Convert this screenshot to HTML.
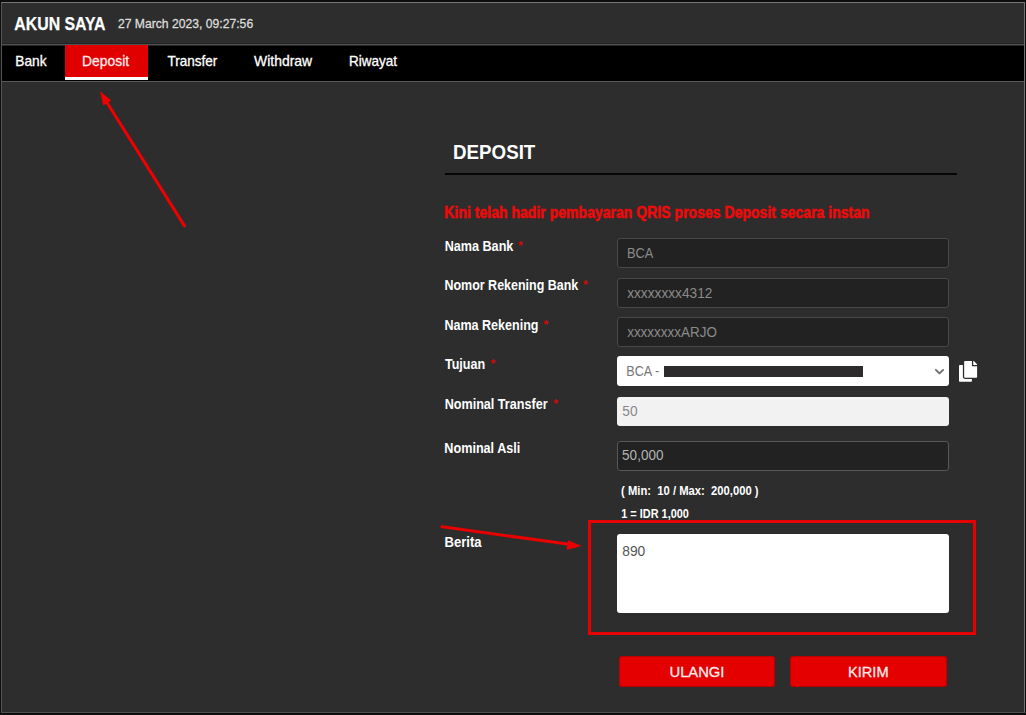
<!DOCTYPE html>
<html lang="id">
<head>
<meta charset="utf-8">
<title>Akun Saya - Deposit</title>
<style>
html,body{margin:0;padding:0;}
body{width:1026px;height:715px;overflow:hidden;background:#0c0d0c;font-family:"Liberation Sans",sans-serif;position:relative;}
.abs,.t{position:absolute;}
.t{white-space:pre;margin:0;padding:0;}
#frame{left:1px;top:2px;width:1022px;height:709px;border:1px solid #6a6a6a;border-color:#787878 #727272 #4e4e4e #565656;background:#2d2d2d;}
#nav{left:2px;top:43px;width:1022px;height:36px;background:#000;border-top:1px solid #4f4f4f;border-bottom:1px solid #595959;box-shadow:0 -1px 0 #242424, inset 0 1px 0 #262626;margin-top:1px;}
#tab{left:65px;top:45px;width:83px;height:32px;background:#e00000;border-bottom:3px solid #fff;}
#hline{left:445px;top:172.5px;width:512px;height:2px;background:#060606;}
.inp{left:617px;width:330px;height:28px;border:1px solid #484848;border-radius:3px;background:#222222;}
#sel{left:617px;top:356.2px;width:331.6px;height:29.6px;border-radius:3px;background:#fff;}
#redact{left:663.5px;top:366px;width:199.5px;height:11px;background:#2d2b2b;}
#nom{left:617px;top:396.7px;width:331.6px;height:29.6px;border-radius:3px;background:#f2f2f2;}
#ta{left:617px;top:534px;width:332px;height:79px;border-radius:3px;background:#fff;}
#redbox{left:588px;top:520px;width:382px;height:109px;border:3px solid #e60000;}
.btn{top:656px;height:31px;border-radius:3px;background:#e50000;box-shadow:inset 0 0 0 1px rgba(110,0,0,.35);}
#b1{left:619px;width:156px;}
#b2{left:790px;width:156.6px;}
.ast{color:#d40808;font-size:12px;font-weight:bold;line-height:12px;}
svg{position:absolute;overflow:visible;}
#t_akun{left:14.00px;top:13.02px;font-size:19px;line-height:22.8px;font-weight:bold;color:#ffffff;transform:translateX(0.34px) scaleX(0.8330);transform-origin:0 0;-webkit-text-stroke:0.25px currentColor;}
#t_date{left:117.00px;top:15.91px;font-size:13.2px;line-height:15.84px;font-weight:normal;color:#dcdcdc;transform:translateX(0.90px) scaleX(0.9223);transform-origin:0 0;-webkit-text-stroke:0.3px currentColor;}
#n_bank{left:15.00px;top:52.66px;font-size:14.2px;line-height:17.04px;font-weight:normal;color:#ffffff;transform:translateX(0.30px) scaleX(0.9692);transform-origin:0 0;-webkit-text-stroke:0.3px currentColor;}
#n_dep{left:82.00px;top:52.66px;font-size:14.2px;line-height:17.04px;font-weight:normal;color:#ffe9e9;transform:translateX(0.10px) scaleX(0.9768);transform-origin:0 0;-webkit-text-stroke:0.3px currentColor;}
#n_tra{left:167.00px;top:52.66px;font-size:14.2px;line-height:17.04px;font-weight:normal;color:#ffffff;transform:translateX(0.47px) scaleX(0.9532);transform-origin:0 0;-webkit-text-stroke:0.3px currentColor;}
#n_wit{left:254.00px;top:52.66px;font-size:14.2px;line-height:17.04px;font-weight:normal;color:#ffffff;transform:translateX(0.10px) scaleX(0.9797);transform-origin:0 0;-webkit-text-stroke:0.3px currentColor;}
#n_riw{left:349.00px;top:52.66px;font-size:14.2px;line-height:17.04px;font-weight:normal;color:#ffffff;transform:translateX(0.12px) scaleX(0.9508);transform-origin:0 0;-webkit-text-stroke:0.3px currentColor;}
#h_dep{left:453.00px;top:139.51px;font-size:20.8px;line-height:24.96px;font-weight:bold;color:#ffffff;transform:translateX(0.00px) scaleX(0.9018);transform-origin:0 0;}
#h_red{left:444.00px;top:203.21px;font-size:17px;line-height:20.4px;font-weight:bold;color:#ec0c0c;transform:translateX(0.34px) scaleX(0.8261);transform-origin:0 0;-webkit-text-stroke:0.35px #ec0c0c;text-shadow:0 0 1px rgba(236,12,12,.55);}
#l_1{left:444.00px;top:238.37px;font-size:14.4px;line-height:17.28px;font-weight:bold;color:#ffffff;transform:translateX(0.64px) scaleX(0.8767);transform-origin:0 0;}
#l_2{left:444.00px;top:277.37px;font-size:14.4px;line-height:17.28px;font-weight:bold;color:#ffffff;transform:translateX(0.43px) scaleX(0.8675);transform-origin:0 0;}
#l_3{left:444.00px;top:316.97px;font-size:14.4px;line-height:17.28px;font-weight:bold;color:#ffffff;transform:translateX(0.42px) scaleX(0.8709);transform-origin:0 0;}
#l_4{left:444.00px;top:356.27px;font-size:14.4px;line-height:17.28px;font-weight:bold;color:#ffffff;transform:translateX(0.92px) scaleX(0.8707);transform-origin:0 0;}
#l_5{left:444.00px;top:396.37px;font-size:14.4px;line-height:17.28px;font-weight:bold;color:#ffffff;transform:translateX(0.63px) scaleX(0.8757);transform-origin:0 0;}
#l_6{left:444.00px;top:440.37px;font-size:14.4px;line-height:17.28px;font-weight:bold;color:#ffffff;transform:translateX(0.33px) scaleX(0.8770);transform-origin:0 0;}
#l_7{left:444.00px;top:534.37px;font-size:14.4px;line-height:17.28px;font-weight:bold;color:#ffffff;transform:translateX(0.52px) scaleX(0.9090);transform-origin:0 0;}
#i_1{left:626.00px;top:244.57px;font-size:14.4px;line-height:17.28px;font-weight:normal;color:#8a8a8a;transform:translateX(0.91px) scaleX(0.8912);transform-origin:0 0;}
#i_2{left:627.00px;top:284.97px;font-size:14.4px;line-height:17.28px;font-weight:normal;color:#8a8a8a;transform:translateX(0.17px) scaleX(0.9512);transform-origin:0 0;}
#i_3{left:627.00px;top:324.37px;font-size:14.4px;line-height:17.28px;font-weight:normal;color:#8a8a8a;transform:translateX(0.16px) scaleX(0.9350);transform-origin:0 0;}
#i_4{left:626.00px;top:363.37px;font-size:14.4px;line-height:17.28px;font-weight:normal;color:#777777;transform:translateX(0.32px) scaleX(0.8779);transform-origin:0 0;}
#i_5{left:622.00px;top:402.67px;font-size:14.3px;line-height:17.16px;font-weight:normal;color:#888888;transform:translateX(0.36px) scaleX(0.9567);transform-origin:0 0;}
#i_6{left:622.00px;top:447.47px;font-size:14.3px;line-height:17.16px;font-weight:normal;color:#b4b4b4;transform:translateX(0.11px) scaleX(0.9444);transform-origin:0 0;}
#i_7{left:622.00px;top:543.17px;font-size:14.4px;line-height:17.28px;font-weight:normal;color:#555555;transform:translateX(0.23px) scaleX(0.9602);transform-origin:0 0;}
#s_1{left:621.00px;top:484.27px;font-size:12.6px;line-height:15.12px;font-weight:bold;color:#ffffff;transform:translateX(0.11px) scaleX(0.8927);transform-origin:0 0;}
#s_2{left:621.00px;top:507.07px;font-size:12.6px;line-height:15.12px;font-weight:bold;color:#ffffff;transform:translateX(0.19px) scaleX(0.8673);transform-origin:0 0;}
#b_1{left:669.00px;top:663.20px;font-size:15px;line-height:18.0px;font-weight:normal;color:#ffecec;transform:translateX(0.47px) scaleX(0.9841);transform-origin:0 0;-webkit-text-stroke:0.3px currentColor;}
#b_2{left:848.00px;top:663.20px;font-size:15px;line-height:18.0px;font-weight:normal;color:#ffecec;transform:translateX(0.03px) scaleX(0.9726);transform-origin:0 0;-webkit-text-stroke:0.3px currentColor;}
</style>
</head>
<body>
<div class="abs" id="frame"></div>
<div class="abs" id="nav"></div>
<div class="abs" id="tab"></div>
<div class="abs" id="hline"></div>
<div class="abs inp" style="top:238px"></div>
<div class="abs inp" style="top:277.5px"></div>
<div class="abs inp" style="top:317px"></div>
<div class="abs" id="sel"></div>
<div class="abs" id="redact"></div>
<div class="abs" id="nom"></div>
<div class="abs inp" style="top:440.6px;border-color:#585858"></div>
<div class="abs" id="redbox"></div>
<div class="abs" id="ta"></div>
<div class="abs btn" id="b1"></div>
<div class="abs btn" id="b2"></div>
<span class="t" id="t_akun">AKUN SAYA</span>
<span class="t" id="t_date">27 March 2023, 09:27:56</span>
<span class="t" id="n_bank">Bank</span>
<span class="t" id="n_dep">Deposit</span>
<span class="t" id="n_tra">Transfer</span>
<span class="t" id="n_wit">Withdraw</span>
<span class="t" id="n_riw">Riwayat</span>
<span class="t" id="h_dep">DEPOSIT</span>
<span class="t" id="h_red">Kini telah hadir pembayaran QRIS proses Deposit secara instan</span>
<span class="t" id="l_1">Nama Bank</span>
<span class="t" id="l_2">Nomor Rekening Bank</span>
<span class="t" id="l_3">Nama Rekening</span>
<span class="t" id="l_4">Tujuan</span>
<span class="t" id="l_5">Nominal Transfer</span>
<span class="t" id="l_6">Nominal Asli</span>
<span class="t" id="l_7">Berita</span>
<span class="t" id="i_1">BCA</span>
<span class="t" id="i_2">xxxxxxxx4312</span>
<span class="t" id="i_3">xxxxxxxxARJO</span>
<span class="t" id="i_4">BCA -</span>
<span class="t" id="i_5">50</span>
<span class="t" id="i_6">50,000</span>
<span class="t" id="i_7">890</span>
<span class="t" id="s_1">( Min:  10 / Max:  200,000 )</span>
<span class="t" id="s_2">1 = IDR 1,000</span>
<span class="t" id="b_1">ULANGI</span>
<span class="t" id="b_2">KIRIM</span>
<!-- asterisks -->
<span class="t ast" style="left:518.02px;top:239.76px">*</span>
<span class="t ast" style="left:583.12px;top:279.26px">*</span>
<span class="t ast" style="left:543.52px;top:318.56px">*</span>
<span class="t ast" style="left:490.52px;top:358.06px">*</span>
<span class="t ast" style="left:553.33px;top:398.06px">*</span>
<!-- chevron -->
<svg style="left:935px;top:368.6px" width="9" height="6" viewBox="0 0 9 6"><path d="M0.9 0.9 L4.5 4.4 L8.1 0.9" fill="none" stroke="#6e6e6e" stroke-width="1.9" stroke-linecap="round" stroke-linejoin="round"/></svg>
<!-- copy icon -->
<svg style="left:959.2px;top:360.9px" width="18.1" height="20.7" viewBox="0 0 448 512"><path fill="#fff" d="M320 448v40c0 13.255-10.745 24-24 24H24c-13.255 0-24-10.745-24-24V120c0-13.255 10.745-24 24-24h72v296c0 30.879 25.121 56 56 56h168zm0-344V0H152c-13.255 0-24 10.745-24 24v368c0 13.255 10.745 24 24 24h272c13.255 0 24-10.745 24-24V128H344c-13.2 0-24-10.8-24-24zm120.971-31.029L375.029 7.029A24 24 0 0 0 358.059 0H352v96h96v-6.059a24 24 0 0 0-7.029-16.97z"/></svg>
<!-- arrows -->
<svg style="left:0;top:0" width="1026" height="715" viewBox="0 0 1026 715">
<line x1="184.5" y1="225.9" x2="106" y2="101" stroke="#f00000" stroke-width="3" stroke-linecap="round"/>
<polygon points="100.1,91.2 111.2,100.6 103.3,105.4" fill="#f00000"/>
<line x1="440.7" y1="526.6" x2="569" y2="544.3" stroke="#e80000" stroke-width="3" stroke-linecap="butt"/>
<polygon points="581.7,546 566.7,550 568,540.2" fill="#e80000"/>
</svg>
</body>
</html>
